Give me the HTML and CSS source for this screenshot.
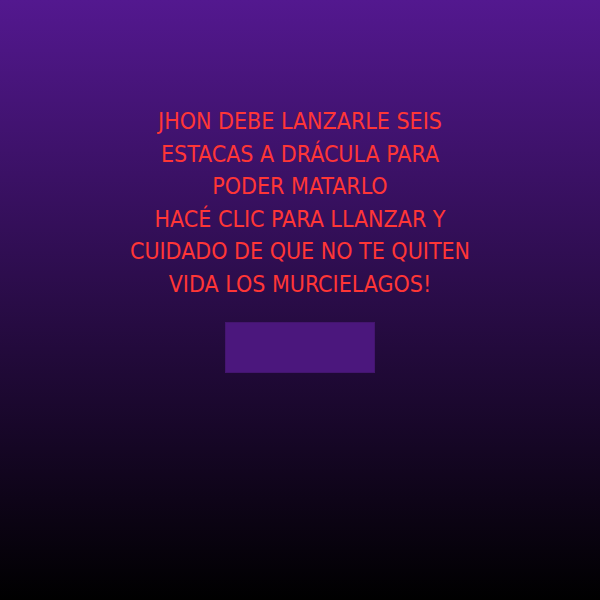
FILE: index.html
```html
<!DOCTYPE html>
<html>
<head>
<meta charset="utf-8">
<link rel="stylesheet" href="styles.css">
</head>
<body>
<main class="screen">
  <div class="intro">
    <p class="line">JHON DEBE LANZARLE SEIS</p>
    <p class="line">ESTACAS A DRÁCULA PARA</p>
    <p class="line">PODER MATARLO</p>
    <p class="line">HACÉ CLIC PARA LLANZAR Y</p>
    <p class="line">CUIDADO DE QUE NO TE QUITEN</p>
    <p class="line">VIDA LOS MURCIELAGOS!</p>
  </div>
  <button class="start" type="button"></button>
</main>
</body>
</html>
```
FILE: styles.css
```css
html, body {
  margin: 0;
  padding: 0;
  width: 600px;
  height: 600px;
}
body {
  background: linear-gradient(to bottom, #53188f 0%, #000000 100%);
}
.screen {
  width: 600px;
  height: 600px;
  display: flex;
  flex-direction: column;
  align-items: center;
  padding-top: 105px;
  box-sizing: border-box;
}
.intro {
  text-align: center;
  color: #ff3636;
  font-family: "DejaVu Sans Condensed", "Liberation Sans Narrow", sans-serif;
  font-size: 23px;
  line-height: 32.5px;
}
.line {
  margin: 0;
}
.start {
  margin-top: 22px;
  width: 150px;
  height: 51px;
  background: #4b177d;
  border: 1px solid #44156f;
  padding: 0;
}
```
